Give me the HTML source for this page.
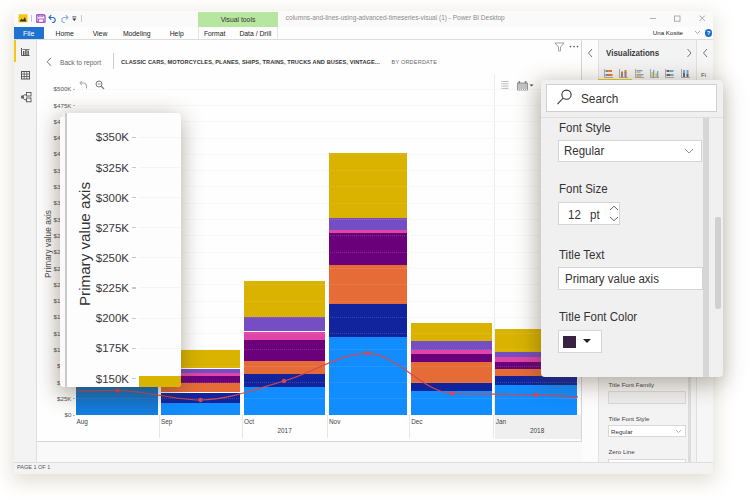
<!DOCTYPE html><html><head><meta charset="utf-8"><style>
*{margin:0;padding:0;box-sizing:border-box}
html,body{width:750px;height:500px;overflow:hidden;background:#fff;font-family:"Liberation Sans", sans-serif}
.a{position:absolute}
.t{position:absolute;white-space:nowrap;line-height:1}
</style></head><body>

<div class="a" style="left:14px;top:11px;width:699px;height:463px;background:#fafafa;box-shadow:0 6px 18px 2px rgba(140,120,85,0.24)"></div>
<div class="a" style="left:14px;top:11px;width:699px;height:16px;background:#fafafa"></div>
<div class="a" style="left:14px;top:27px;width:699px;height:12.5px;background:#fdfdfd;border-bottom:1px solid #dcdcdc"></div>
<div class="a" style="left:14px;top:27px;width:30px;height:12px;background:#1f72cf"></div>
<div class="t" style="left:23px;top:30.3px;font-size:7px;color:#fff">File</div>
<div class="t" style="left:24.700000000000003px;width:80px;text-align:center;top:30.6px;font-size:6.8px;color:#222">Home</div>
<div class="t" style="left:60px;width:80px;text-align:center;top:30.6px;font-size:6.8px;color:#222">View</div>
<div class="t" style="left:96.69999999999999px;width:80px;text-align:center;top:30.6px;font-size:6.8px;color:#222">Modeling</div>
<div class="t" style="left:136.7px;width:80px;text-align:center;top:30.6px;font-size:6.8px;color:#222">Help</div>
<div class="t" style="left:174.7px;width:80px;text-align:center;top:30.6px;font-size:6.8px;color:#222">Format</div>
<div class="t" style="left:215.3px;width:80px;text-align:center;top:30.6px;font-size:6.8px;color:#222">Data / Drill</div>
<div class="a" style="left:198px;top:12px;width:80px;height:14.6px;background:#b6e6a0"></div>
<div class="a" style="left:198px;top:26.6px;width:80px;height:12px;border-left:1px solid #e4e4e4;border-right:1px solid #e4e4e4"></div>
<div class="t" style="left:198px;width:80px;text-align:center;top:17.2px;font-size:6.8px;color:#333">Visual tools</div>
<div class="t" style="left:285.8px;top:15.2px;font-size:6.5px;color:#8a8a8a">columns-and-lines-using-advanced-timeseries-visual (1) - Power BI Desktop</div>
<svg class="a" style="left:17.5px;top:14px" width="10" height="9"><rect x="0.5" y="0.3" width="9" height="8" fill="#f2c811"/><path d="M2 7 L3.5 4.5 L5 6 L7 3 L8 7 Z" fill="#3a2e28"/><rect x="1.8" y="6.6" width="6.5" height="0.9" fill="#3a2e28"/></svg>
<div class="a" style="left:30.5px;top:14.5px;width:1px;height:7px;background:#c8c8c8"></div>
<svg class="a" style="left:36px;top:14px" width="10" height="9"><path d="M0.8 0.8 H8 L9 1.8 V8.2 H0.8 Z" fill="none" stroke="#9a3fbf" stroke-width="1.2"/><rect x="2.5" y="0.8" width="4.5" height="2" fill="none" stroke="#9a3fbf" stroke-width="0.6"/><rect x="2.3" y="5" width="5" height="3.2" fill="#fff" stroke="#9a3fbf" stroke-width="0.8"/></svg>
<svg class="a" style="left:48px;top:13.5px" width="9" height="9"><path d="M3.2 1.2 L1 3.5 L3.2 5.7" fill="none" stroke="#2e6fc0" stroke-width="1.2"/><path d="M1.2 3.5 H5.2 A2.6 2.6 0 0 1 5.2 8.6 H4" fill="none" stroke="#2e6fc0" stroke-width="1.2"/></svg>
<svg class="a" style="left:60px;top:13.5px" width="9" height="9"><path d="M5.8 1.2 L8 3.5 L5.8 5.7" fill="none" stroke="#8fb4e0" stroke-width="1.2"/><path d="M7.8 3.5 H3.8 A2.6 2.6 0 0 0 3.8 8.6 H5" fill="none" stroke="#8fb4e0" stroke-width="1.2"/></svg>
<svg class="a" style="left:72px;top:16px" width="5" height="6"><rect x="0.3" y="0.5" width="4" height="0.8" fill="#333"/><path d="M0.3 2.5 H4.3 L2.3 5 Z" fill="#333"/></svg>
<div class="a" style="left:80.5px;top:14.5px;width:1px;height:7px;background:#c8c8c8"></div>
<svg class="a" style="left:648px;top:13px" width="60" height="10"><line x1="2" y1="5.5" x2="8" y2="5.5" stroke="#999" stroke-width="0.8"/><rect x="26.5" y="3" width="5.5" height="5.2" fill="none" stroke="#999" stroke-width="0.8"/><path d="M51.5 2.5 L57 8 M57 2.5 L51.5 8" stroke="#999" stroke-width="0.8"/></svg>
<div class="t" style="left:652.8px;top:30px;font-size:6.2px;color:#222">Una Kosite</div>
<svg class="a" style="left:694px;top:30px" width="7" height="5"><path d="M1 1 L3.5 3.5 L6 1" fill="none" stroke="#999" stroke-width="0.8"/></svg>
<div class="a" style="left:704.5px;top:29.3px;width:7.5px;height:7.5px;border-radius:50%;background:#1a6fd0"></div>
<div class="t" style="left:706.8px;top:30.2px;font-size:6px;font-weight:bold;color:#fff">?</div>
<div class="a" style="left:14px;top:39.5px;width:22.5px;height:422.5px;background:#f3f3f3;border-right:1px solid #dedede"></div>
<div class="a" style="left:14px;top:40px;width:2px;height:22px;background:#f2c811"></div>
<svg class="a" style="left:21px;top:48px" width="9" height="8"><path d="M0.5 0 V7.5 H8.5" fill="none" stroke="#555" stroke-width="1"/><rect x="2" y="3" width="1.4" height="4" fill="#555"/><rect x="4.2" y="1.5" width="1.4" height="5.5" fill="#555"/><rect x="6.4" y="2.5" width="1.4" height="4.5" fill="#555"/><rect x="1.5" y="1" width="7" height="1" fill="#777"/></svg>
<svg class="a" style="left:21px;top:70.5px" width="9" height="9"><rect x="0.5" y="0.5" width="8" height="7.5" fill="none" stroke="#555" stroke-width="1"/><path d="M0.5 3 H8.5 M0.5 5.5 H8.5 M3.2 0.5 V8 M5.8 0.5 V8" stroke="#555" stroke-width="0.8"/></svg>
<svg class="a" style="left:20.5px;top:92px" width="11" height="11"><rect x="5.5" y="0.5" width="4.5" height="3.5" fill="none" stroke="#555" stroke-width="0.9"/><rect x="5.5" y="6" width="4.5" height="3.8" fill="none" stroke="#555" stroke-width="0.9"/><path d="M0.8 5 L4 2.5 L5.5 3.5 M0.8 5 L4 8 L5.5 7.5" fill="none" stroke="#555" stroke-width="0.9"/><rect x="0.5" y="4" width="2" height="2" fill="none" stroke="#555" stroke-width="0.8"/></svg>
<div class="a" style="left:37px;top:40px;width:545px;height:422px;background:#f9f9f9"></div>
<div class="a" style="left:37px;top:40px;width:544.5px;height:402px;background:#fefefe;border-right:1px solid #d6d6d6;border-bottom:1px solid #d6d6d6"></div>
<svg class="a" style="left:46px;top:57px" width="8" height="10"><path d="M5 0.8 L1.2 4.8 L5 8.8" fill="none" stroke="#666" stroke-width="0.9"/></svg>
<div class="t" style="left:60px;top:59.5px;font-size:6.6px;color:#666">Back to report</div>
<div class="a" style="left:112.5px;top:53px;width:1px;height:16px;background:#ccc"></div>
<div class="t" style="left:121px;top:60px;font-size:5.6px;font-weight:bold;color:#333;letter-spacing:0.1px">CLASSIC CARS, MOTORCYCLES, PLANES, SHIPS, TRAINS, TRUCKS AND BUSES, VINTAGE...</div>
<div class="t" style="left:391.5px;top:59.6px;font-size:5.5px;color:#666;letter-spacing:0.22px">BY ORDERDATE</div>
<svg class="a" style="left:554px;top:42px" width="11" height="10"><path d="M1 1 L10 1 L6.5 5 L6.5 9 L4.5 9 L4.5 5 Z" fill="none" stroke="#999" stroke-width="0.9"/></svg>
<svg class="a" style="left:568px;top:44px" width="12" height="5"><circle cx="2.5" cy="2.6" r="0.8" fill="#555"/><circle cx="6" cy="2.6" r="0.8" fill="#555"/><circle cx="9.5" cy="2.6" r="0.8" fill="#555"/></svg>
<svg class="a" style="left:590px;top:73px" width="8" height="7"><path d="M6.5 0.8 L1 3.5 L6.5 6.2" fill="none" stroke="#999" stroke-width="0.8"/></svg>
<svg class="a" style="left:78.5px;top:80px" width="9" height="9"><path d="M3 0.8 L0.8 3 L3 5.2" fill="none" stroke="#999" stroke-width="0.9"/><path d="M1 3 H4.5 Q7.5 3 7.5 6 V8.5" fill="none" stroke="#999" stroke-width="0.9"/></svg>
<svg class="a" style="left:95px;top:80px" width="10" height="10"><circle cx="4" cy="4" r="3" fill="none" stroke="#777" stroke-width="1"/><line x1="6.2" y1="6.2" x2="9" y2="9" stroke="#777" stroke-width="1.2"/><line x1="2.5" y1="4" x2="5.5" y2="4" stroke="#777" stroke-width="0.8"/></svg>
<svg class="a" style="left:500.5px;top:80px" width="8" height="10"><g fill="#999"><rect x="0.5" y="1" width="1" height="1"/><rect x="0.5" y="3.3" width="1" height="1"/><rect x="0.5" y="5.6" width="1" height="1"/><rect x="0.5" y="7.9" width="1" height="1"/></g><g stroke="#aaa" stroke-width="0.8"><line x1="2" y1="1.5" x2="7.5" y2="1.5"/><line x1="2" y1="3.8" x2="7.5" y2="3.8"/><line x1="2" y1="6.1" x2="7.5" y2="6.1"/><line x1="2" y1="8.4" x2="7.5" y2="8.4"/></g></svg>
<svg class="a" style="left:516.5px;top:80.5px" width="18" height="10"><rect x="0.5" y="2" width="10" height="7" fill="#c4c4c4" stroke="#888" stroke-width="0.8"/><rect x="1.5" y="0" width="1.6" height="2.5" fill="#888"/><rect x="7.8" y="0" width="1.6" height="2.5" fill="#888"/><path d="M12.5 3.5 L16.5 3.5 L14.5 5.5 Z" fill="#444"/></svg>
<div class="t" style="left:30px;width:41.5px;text-align:right;top:412.2px;font-size:6.2px;color:#555">$0</div>
<div class="a" style="left:72.5px;top:414.6px;width:2px;height:0.8px;background:#bbb"></div>
<div class="t" style="left:30px;width:41.5px;text-align:right;top:395.9px;font-size:6.2px;color:#555">$25K</div>
<div class="a" style="left:72.5px;top:398.3px;width:2px;height:0.8px;background:#bbb"></div>
<div class="a" style="left:76px;top:398.3px;width:505px;height:0;border-top:1px dotted #f0f0f0"></div>
<div class="t" style="left:30px;width:41.5px;text-align:right;top:379.6px;font-size:6.2px;color:#555">$50K</div>
<div class="a" style="left:72.5px;top:382.0px;width:2px;height:0.8px;background:#bbb"></div>
<div class="a" style="left:76px;top:382.0px;width:505px;height:0;border-top:1px dotted #f0f0f0"></div>
<div class="t" style="left:30px;width:41.5px;text-align:right;top:363.3px;font-size:6.2px;color:#555">$75K</div>
<div class="a" style="left:72.5px;top:365.7px;width:2px;height:0.8px;background:#bbb"></div>
<div class="a" style="left:76px;top:365.7px;width:505px;height:0;border-top:1px dotted #f0f0f0"></div>
<div class="t" style="left:30px;width:41.5px;text-align:right;top:347.0px;font-size:6.2px;color:#555">$100K</div>
<div class="a" style="left:72.5px;top:349.4px;width:2px;height:0.8px;background:#bbb"></div>
<div class="a" style="left:76px;top:349.4px;width:505px;height:0;border-top:1px dotted #f0f0f0"></div>
<div class="t" style="left:30px;width:41.5px;text-align:right;top:330.7px;font-size:6.2px;color:#555">$125K</div>
<div class="a" style="left:72.5px;top:333.1px;width:2px;height:0.8px;background:#bbb"></div>
<div class="a" style="left:76px;top:333.1px;width:505px;height:0;border-top:1px dotted #f0f0f0"></div>
<div class="t" style="left:30px;width:41.5px;text-align:right;top:314.4px;font-size:6.2px;color:#555">$150K</div>
<div class="a" style="left:72.5px;top:316.8px;width:2px;height:0.8px;background:#bbb"></div>
<div class="a" style="left:76px;top:316.8px;width:505px;height:0;border-top:1px dotted #f0f0f0"></div>
<div class="t" style="left:30px;width:41.5px;text-align:right;top:298.1px;font-size:6.2px;color:#555">$175K</div>
<div class="a" style="left:72.5px;top:300.5px;width:2px;height:0.8px;background:#bbb"></div>
<div class="a" style="left:76px;top:300.5px;width:505px;height:0;border-top:1px dotted #f0f0f0"></div>
<div class="t" style="left:30px;width:41.5px;text-align:right;top:281.8px;font-size:6.2px;color:#555">$200K</div>
<div class="a" style="left:72.5px;top:284.2px;width:2px;height:0.8px;background:#bbb"></div>
<div class="a" style="left:76px;top:284.2px;width:505px;height:0;border-top:1px dotted #f0f0f0"></div>
<div class="t" style="left:30px;width:41.5px;text-align:right;top:265.5px;font-size:6.2px;color:#555">$225K</div>
<div class="a" style="left:72.5px;top:267.9px;width:2px;height:0.8px;background:#bbb"></div>
<div class="a" style="left:76px;top:267.9px;width:505px;height:0;border-top:1px dotted #f0f0f0"></div>
<div class="t" style="left:30px;width:41.5px;text-align:right;top:249.2px;font-size:6.2px;color:#555">$250K</div>
<div class="a" style="left:72.5px;top:251.6px;width:2px;height:0.8px;background:#bbb"></div>
<div class="a" style="left:76px;top:251.6px;width:505px;height:0;border-top:1px dotted #f0f0f0"></div>
<div class="t" style="left:30px;width:41.5px;text-align:right;top:232.9px;font-size:6.2px;color:#555">$275K</div>
<div class="a" style="left:72.5px;top:235.3px;width:2px;height:0.8px;background:#bbb"></div>
<div class="a" style="left:76px;top:235.3px;width:505px;height:0;border-top:1px dotted #f0f0f0"></div>
<div class="t" style="left:30px;width:41.5px;text-align:right;top:216.6px;font-size:6.2px;color:#555">$300K</div>
<div class="a" style="left:72.5px;top:219.0px;width:2px;height:0.8px;background:#bbb"></div>
<div class="a" style="left:76px;top:219.0px;width:505px;height:0;border-top:1px dotted #f0f0f0"></div>
<div class="t" style="left:30px;width:41.5px;text-align:right;top:200.3px;font-size:6.2px;color:#555">$325K</div>
<div class="a" style="left:72.5px;top:202.7px;width:2px;height:0.8px;background:#bbb"></div>
<div class="a" style="left:76px;top:202.7px;width:505px;height:0;border-top:1px dotted #f0f0f0"></div>
<div class="t" style="left:30px;width:41.5px;text-align:right;top:184.0px;font-size:6.2px;color:#555">$350K</div>
<div class="a" style="left:72.5px;top:186.4px;width:2px;height:0.8px;background:#bbb"></div>
<div class="a" style="left:76px;top:186.4px;width:505px;height:0;border-top:1px dotted #f0f0f0"></div>
<div class="t" style="left:30px;width:41.5px;text-align:right;top:167.7px;font-size:6.2px;color:#555">$375K</div>
<div class="a" style="left:72.5px;top:170.1px;width:2px;height:0.8px;background:#bbb"></div>
<div class="a" style="left:76px;top:170.1px;width:505px;height:0;border-top:1px dotted #f0f0f0"></div>
<div class="t" style="left:30px;width:41.5px;text-align:right;top:151.4px;font-size:6.2px;color:#555">$400K</div>
<div class="a" style="left:72.5px;top:153.8px;width:2px;height:0.8px;background:#bbb"></div>
<div class="a" style="left:76px;top:153.8px;width:505px;height:0;border-top:1px dotted #f0f0f0"></div>
<div class="t" style="left:30px;width:41.5px;text-align:right;top:135.1px;font-size:6.2px;color:#555">$425K</div>
<div class="a" style="left:72.5px;top:137.5px;width:2px;height:0.8px;background:#bbb"></div>
<div class="a" style="left:76px;top:137.5px;width:505px;height:0;border-top:1px dotted #f0f0f0"></div>
<div class="t" style="left:30px;width:41.5px;text-align:right;top:118.8px;font-size:6.2px;color:#555">$450K</div>
<div class="a" style="left:72.5px;top:121.2px;width:2px;height:0.8px;background:#bbb"></div>
<div class="a" style="left:76px;top:121.2px;width:505px;height:0;border-top:1px dotted #f0f0f0"></div>
<div class="t" style="left:30px;width:41.5px;text-align:right;top:102.5px;font-size:6.2px;color:#555">$475K</div>
<div class="a" style="left:72.5px;top:104.9px;width:2px;height:0.8px;background:#bbb"></div>
<div class="a" style="left:76px;top:104.9px;width:505px;height:0;border-top:1px dotted #f0f0f0"></div>
<div class="t" style="left:30px;width:41.5px;text-align:right;top:86.2px;font-size:6.2px;color:#555">$500K</div>
<div class="a" style="left:72.5px;top:88.6px;width:2px;height:0.8px;background:#bbb"></div>
<div class="a" style="left:76px;top:88.6px;width:505px;height:0;border-top:1px dotted #f0f0f0"></div>
<div class="t" style="left:47.5px;top:244px;font-size:8.3px;color:#444;transform:translate(-50%,-50%) rotate(-90deg)">Primary value axis</div>
<div class="a" style="left:495px;top:415px;width:86px;height:23.5px;background:#efefef"></div>
<div class="a" style="left:493.5px;top:75px;width:1px;height:340px;background:#ececec"></div>
<div class="a" style="left:76px;top:316.9px;width:82px;height:13.1px;background:#d9b300"></div>
<div class="a" style="left:76px;top:330px;width:82px;height:6px;background:#744ec2"></div>
<div class="a" style="left:76px;top:336px;width:82px;height:4px;background:#e044a7"></div>
<div class="a" style="left:76px;top:340px;width:82px;height:12px;background:#6b007b"></div>
<div class="a" style="left:76px;top:352px;width:82px;height:16px;background:#e66c37"></div>
<div class="a" style="left:76px;top:368px;width:82px;height:14px;background:#12239e"></div>
<div class="a" style="left:76px;top:382px;width:82px;height:32.6px;background:#118dff"></div>
<div class="a" style="left:160.5px;top:349.6px;width:79.5px;height:18.9px;background:#d9b300"></div>
<div class="a" style="left:160.5px;top:368.5px;width:79.5px;height:4.8px;background:#744ec2"></div>
<div class="a" style="left:160.5px;top:373.3px;width:79.5px;height:2.7px;background:#e044a7"></div>
<div class="a" style="left:160.5px;top:376px;width:79.5px;height:6.9px;background:#6b007b"></div>
<div class="a" style="left:160.5px;top:382.9px;width:79.5px;height:9.6px;background:#e66c37"></div>
<div class="a" style="left:160.5px;top:392.5px;width:79.5px;height:10.2px;background:#12239e"></div>
<div class="a" style="left:160.5px;top:402.7px;width:79.5px;height:11.9px;background:#118dff"></div>
<div class="a" style="left:243.5px;top:281.4px;width:81.5px;height:36.0px;background:#d9b300"></div>
<div class="a" style="left:243.5px;top:317.4px;width:81.5px;height:14.1px;background:#744ec2"></div>
<div class="a" style="left:243.5px;top:331.5px;width:81.5px;height:8.5px;background:#e044a7"></div>
<div class="a" style="left:243.5px;top:340px;width:81.5px;height:20.6px;background:#6b007b"></div>
<div class="a" style="left:243.5px;top:360.6px;width:81.5px;height:13.8px;background:#e66c37"></div>
<div class="a" style="left:243.5px;top:374.4px;width:81.5px;height:12.6px;background:#12239e"></div>
<div class="a" style="left:243.5px;top:387px;width:81.5px;height:27.6px;background:#118dff"></div>
<div class="a" style="left:328.5px;top:153.4px;width:78.5px;height:64.2px;background:#d9b300"></div>
<div class="a" style="left:328.5px;top:217.6px;width:78.5px;height:12.4px;background:#744ec2"></div>
<div class="a" style="left:328.5px;top:230px;width:78.5px;height:3px;background:#e044a7"></div>
<div class="a" style="left:328.5px;top:233px;width:78.5px;height:31.7px;background:#6b007b"></div>
<div class="a" style="left:328.5px;top:264.7px;width:78.5px;height:39.0px;background:#e66c37"></div>
<div class="a" style="left:328.5px;top:303.7px;width:78.5px;height:33.3px;background:#12239e"></div>
<div class="a" style="left:328.5px;top:337px;width:78.5px;height:77.6px;background:#118dff"></div>
<div class="a" style="left:410.7px;top:323.2px;width:81.3px;height:18.1px;background:#d9b300"></div>
<div class="a" style="left:410.7px;top:341.3px;width:81.3px;height:8.4px;background:#744ec2"></div>
<div class="a" style="left:410.7px;top:349.7px;width:81.3px;height:4.2px;background:#e044a7"></div>
<div class="a" style="left:410.7px;top:353.9px;width:81.3px;height:8.4px;background:#6b007b"></div>
<div class="a" style="left:410.7px;top:362.3px;width:81.3px;height:21.0px;background:#e66c37"></div>
<div class="a" style="left:410.7px;top:383.3px;width:81.3px;height:7.3px;background:#12239e"></div>
<div class="a" style="left:410.7px;top:390.6px;width:81.3px;height:24.0px;background:#118dff"></div>
<div class="a" style="left:495.3px;top:329.3px;width:81.7px;height:22.5px;background:#d9b300"></div>
<div class="a" style="left:495.3px;top:351.8px;width:81.7px;height:5.2px;background:#744ec2"></div>
<div class="a" style="left:495.3px;top:357px;width:81.7px;height:5.3px;background:#e044a7"></div>
<div class="a" style="left:495.3px;top:362.3px;width:81.7px;height:6.3px;background:#6b007b"></div>
<div class="a" style="left:495.3px;top:368.6px;width:81.7px;height:7.4px;background:#e66c37"></div>
<div class="a" style="left:495.3px;top:376px;width:81.7px;height:9px;background:#12239e"></div>
<div class="a" style="left:495.3px;top:385px;width:81.7px;height:29.6px;background:#118dff"></div>
<div class="a" style="left:76px;top:398.3px;width:501px;height:0;border-top:1px dotted rgba(255,255,255,0.16)"></div>
<div class="a" style="left:76px;top:382.0px;width:501px;height:0;border-top:1px dotted rgba(255,255,255,0.16)"></div>
<div class="a" style="left:76px;top:365.7px;width:501px;height:0;border-top:1px dotted rgba(255,255,255,0.16)"></div>
<div class="a" style="left:76px;top:349.4px;width:501px;height:0;border-top:1px dotted rgba(255,255,255,0.16)"></div>
<div class="a" style="left:76px;top:333.1px;width:501px;height:0;border-top:1px dotted rgba(255,255,255,0.16)"></div>
<div class="a" style="left:76px;top:316.8px;width:501px;height:0;border-top:1px dotted rgba(255,255,255,0.16)"></div>
<div class="a" style="left:76px;top:300.5px;width:501px;height:0;border-top:1px dotted rgba(255,255,255,0.16)"></div>
<div class="a" style="left:76px;top:284.2px;width:501px;height:0;border-top:1px dotted rgba(255,255,255,0.16)"></div>
<div class="a" style="left:76px;top:267.9px;width:501px;height:0;border-top:1px dotted rgba(255,255,255,0.16)"></div>
<div class="a" style="left:76px;top:251.6px;width:501px;height:0;border-top:1px dotted rgba(255,255,255,0.16)"></div>
<div class="a" style="left:76px;top:235.3px;width:501px;height:0;border-top:1px dotted rgba(255,255,255,0.16)"></div>
<div class="a" style="left:76px;top:219.0px;width:501px;height:0;border-top:1px dotted rgba(255,255,255,0.16)"></div>
<div class="a" style="left:76px;top:202.7px;width:501px;height:0;border-top:1px dotted rgba(255,255,255,0.16)"></div>
<div class="a" style="left:76px;top:186.4px;width:501px;height:0;border-top:1px dotted rgba(255,255,255,0.16)"></div>
<div class="a" style="left:76px;top:170.1px;width:501px;height:0;border-top:1px dotted rgba(255,255,255,0.16)"></div>
<div class="a" style="left:76px;top:153.8px;width:501px;height:0;border-top:1px dotted rgba(255,255,255,0.16)"></div>
<div class="a" style="left:76px;top:137.5px;width:501px;height:0;border-top:1px dotted rgba(255,255,255,0.16)"></div>
<div class="a" style="left:76px;top:121.2px;width:501px;height:0;border-top:1px dotted rgba(255,255,255,0.16)"></div>
<div class="a" style="left:76px;top:104.9px;width:501px;height:0;border-top:1px dotted rgba(255,255,255,0.16)"></div>
<div class="a" style="left:76px;top:88.6px;width:501px;height:0;border-top:1px dotted rgba(255,255,255,0.16)"></div>
<div class="a" style="left:76px;top:386px;width:82px;height:28.6px;background:linear-gradient(rgba(20,10,0,0.22),rgba(20,10,0,0.1))"></div>
<div class="t" style="left:76.5px;top:419.3px;font-size:6.4px;color:#444">Aug</div>
<div class="t" style="left:161.0px;top:419.3px;font-size:6.4px;color:#444">Sep</div>
<div class="a" style="left:158.5px;top:414.6px;width:1px;height:23px;background:#e6e6e6"></div>
<div class="t" style="left:244.0px;top:419.3px;font-size:6.4px;color:#444">Oct</div>
<div class="a" style="left:241.5px;top:414.6px;width:1px;height:23px;background:#e6e6e6"></div>
<div class="t" style="left:329.0px;top:419.3px;font-size:6.4px;color:#444">Nov</div>
<div class="a" style="left:326.5px;top:414.6px;width:1px;height:23px;background:#e6e6e6"></div>
<div class="t" style="left:411.2px;top:419.3px;font-size:6.4px;color:#444">Dec</div>
<div class="a" style="left:408.7px;top:414.6px;width:1px;height:23px;background:#e6e6e6"></div>
<div class="t" style="left:495.8px;top:419.3px;font-size:6.4px;color:#444">Jan</div>
<div class="a" style="left:493.3px;top:414.6px;width:1px;height:23px;background:#e6e6e6"></div>
<div class="t" style="left:277.5px;top:427.5px;font-size:6.4px;color:#444">2017</div>
<div class="t" style="left:530px;top:427.5px;font-size:6.4px;color:#444">2018</div>
<svg class="a" style="left:0;top:0" width="750" height="500"><path d="M76 391 C89.83 390.83 103.67 390.5 117.5 390.5 C145.17 390.5 172.83 400.0 200.5 400 C228.33 400.0 256.17 388.77 284 381 C311.9 373.21 339.8 353.3 367.7 353.3 C395.8 353.3 423.9 392.63 452 393.5 C479.9 394.37 507.8 393.93 535.7 394.8 C549.8 395.24 563.9 396.13 578 396.8" fill="none" stroke="#d9464e" stroke-width="1.2"/><circle cx="117.5" cy="390.5" r="2.2" fill="#d9464e"/><circle cx="200.5" cy="400" r="2.2" fill="#d9464e"/><circle cx="284" cy="381" r="2.2" fill="#d9464e"/><circle cx="367.7" cy="353.3" r="2.2" fill="#d9464e"/><circle cx="452" cy="393.5" r="2.2" fill="#d9464e"/><circle cx="535.7" cy="394.8" r="2.2" fill="#d9464e"/></svg>
<div class="a" style="left:582px;top:40px;width:17px;height:422px;background:#fcfcfc;border-right:1px solid #e2e2e2"></div>
<svg class="a" style="left:587px;top:48px" width="7" height="10"><path d="M5 1 L1.5 5 L5 9" fill="none" stroke="#666" stroke-width="0.9"/></svg>
<div class="a" style="left:599px;top:40px;width:98px;height:422px;background:#f3f3f3;border-right:1px solid #e0e0e0"></div>
<div class="t" style="left:606px;top:48.8px;font-size:9.2px;font-weight:bold;color:#3a3a3a;transform:scaleX(0.87);transform-origin:0 0">Visualizations</div>
<svg class="a" style="left:685.5px;top:48px" width="7" height="10"><path d="M1.5 1 L5 5 L1.5 9" fill="none" stroke="#666" stroke-width="0.9"/></svg>
<div class="a" style="left:697px;top:40px;width:16px;height:422px;background:#f6f6f6"></div>
<svg class="a" style="left:702px;top:48px" width="7" height="10"><path d="M5 1 L1.5 5 L5 9" fill="none" stroke="#666" stroke-width="0.9"/></svg>
<div class="t" style="left:701px;top:72px;font-size:6px;color:#444">Fi</div>
<svg class="a" style="left:604px;top:69px" width="9.5" height="9"><path d="M0.5 0 V8.5 H9" stroke="#999" stroke-width="0.8" fill="none"/><rect x="1.5" y="1" width="3" height="2" fill="#888"/><rect x="4.5" y="1" width="3.5" height="2" fill="#e8742f"/><rect x="1.5" y="5" width="2.5" height="2" fill="#888"/><rect x="4" y="5" width="4.5" height="2" fill="#e8742f"/></svg>
<svg class="a" style="left:619px;top:69px" width="9.5" height="9"><path d="M0.5 0 V8.5 H9" stroke="#999" stroke-width="0.8" fill="none"/><rect x="2" y="4" width="2" height="4" fill="#888"/><rect x="2" y="2.5" width="2" height="2" fill="#e8742f"/><rect x="5.5" y="3" width="2" height="5" fill="#888"/><rect x="5.5" y="1" width="2" height="3" fill="#e8742f"/></svg>
<svg class="a" style="left:634.5px;top:69px" width="9.5" height="9"><path d="M0.5 0 V8.5 H9" stroke="#999" stroke-width="0.8" fill="none"/><rect x="1.5" y="1" width="6" height="1.3" fill="#6fa8dc"/><rect x="1.5" y="2.5" width="4" height="1.3" fill="#e8a53a"/><rect x="1.5" y="5" width="7" height="1.3" fill="#6fa8dc"/><rect x="1.5" y="6.5" width="5" height="1.3" fill="#e8a53a"/></svg>
<svg class="a" style="left:650px;top:69px" width="9.5" height="9"><path d="M0.5 0 V8.5 H9" stroke="#999" stroke-width="0.8" fill="none"/><rect x="1.5" y="3" width="1.3" height="5" fill="#e8c43a"/><rect x="3" y="1" width="1.3" height="7" fill="#6fa8dc"/><rect x="5.5" y="4" width="1.3" height="4" fill="#e8c43a"/><rect x="7" y="2" width="1.3" height="6" fill="#6fa8dc"/></svg>
<svg class="a" style="left:665px;top:69px" width="9.5" height="9"><path d="M0.5 0 V8.5 H9" stroke="#999" stroke-width="0.8" fill="none"/><rect x="1.5" y="1" width="3" height="2" fill="#666"/><rect x="4.5" y="1" width="4" height="2" fill="#6fa8dc"/><rect x="1.5" y="5" width="4" height="2" fill="#666"/><rect x="5.5" y="5" width="3" height="2" fill="#6fa8dc"/></svg>
<svg class="a" style="left:680.5px;top:69px" width="9.5" height="9"><path d="M0.5 0 V8.5 H9" stroke="#999" stroke-width="0.8" fill="none"/><rect x="2" y="1" width="2" height="3" fill="#6fa8dc"/><rect x="2" y="4" width="2" height="4" fill="#666"/><rect x="5.5" y="1" width="2" height="4" fill="#6fa8dc"/><rect x="5.5" y="5" width="2" height="3" fill="#666"/></svg>
<div class="a" style="left:598px;top:78.5px;width:34px;height:1.2px;background:#f2c811"></div>
<div class="t" style="left:608.5px;top:382px;font-size:6.2px;color:#444">Title Font Family</div>
<div class="a" style="left:608px;top:391.4px;width:78px;height:12.6px;background:#ececec;border:1px solid #d8d8d8"></div>
<div class="t" style="left:608.5px;top:415.5px;font-size:6.2px;color:#444">Title Font Style</div>
<div class="a" style="left:608px;top:425px;width:78px;height:12px;background:#fff;border:1px solid #d8d8d8"></div>
<div class="t" style="left:611px;top:428.5px;font-size:6.2px;color:#333">Regular</div>
<svg class="a" style="left:675px;top:429px" width="7" height="5"><path d="M1 1 L3.5 3.5 L6 1" fill="none" stroke="#999" stroke-width="0.7"/></svg>
<div class="t" style="left:608.5px;top:449px;font-size:6.2px;color:#444">Zero Line</div>
<div class="a" style="left:608px;top:458.6px;width:78px;height:4px;background:#fff;border:1px solid #d8d8d8;border-bottom:none"></div>
<div class="a" style="left:687.5px;top:90px;width:3px;height:372px;background:#dcdcdc"></div>
<div class="a" style="left:14px;top:462px;width:699px;height:12px;background:#f3f3f3;border-top:1px solid #dedede"></div>
<div class="t" style="left:17px;top:465.3px;font-size:5.5px;color:#555">PAGE 1 OF 1</div>
<div class="a" style="left:62px;top:113px;width:119px;height:273.5px;background:#fdfdfd;border-radius:0 4px 4px 4px;box-shadow:-2px 6px 22px 2px rgba(70,55,30,0.42)"></div>
<div class="a" style="left:60px;top:117px;width:5px;height:269.5px;background:#fbf9f9;border-bottom-left-radius:4px"></div>
<div class="a" style="left:62px;top:113px;width:3px;height:4px;background:rgba(240,236,230,0.9)"></div>
<div class="a" style="left:65px;top:113px;width:2px;height:273.5px;background:#cacaca"></div>
<div class="t" style="left:70px;width:59px;text-align:right;top:132.4px;font-size:11.5px;color:#3a3640">$350K</div>
<div class="a" style="left:132px;top:136.6px;width:4px;height:1.2px;background:#c8c8c8"></div>
<div class="a" style="left:139px;top:136.6px;width:41px;height:0;border-top:1px dotted #ececec"></div>
<div class="t" style="left:70px;width:59px;text-align:right;top:162.55px;font-size:11.5px;color:#3a3640">$325K</div>
<div class="a" style="left:132px;top:166.75px;width:4px;height:1.2px;background:#c8c8c8"></div>
<div class="a" style="left:139px;top:166.75px;width:41px;height:0;border-top:1px dotted #ececec"></div>
<div class="t" style="left:70px;width:59px;text-align:right;top:192.7px;font-size:11.5px;color:#3a3640">$300K</div>
<div class="a" style="left:132px;top:196.9px;width:4px;height:1.2px;background:#c8c8c8"></div>
<div class="a" style="left:139px;top:196.9px;width:41px;height:0;border-top:1px dotted #ececec"></div>
<div class="t" style="left:70px;width:59px;text-align:right;top:222.85px;font-size:11.5px;color:#3a3640">$275K</div>
<div class="a" style="left:132px;top:227.05px;width:4px;height:1.2px;background:#c8c8c8"></div>
<div class="a" style="left:139px;top:227.05px;width:41px;height:0;border-top:1px dotted #ececec"></div>
<div class="t" style="left:70px;width:59px;text-align:right;top:253.0px;font-size:11.5px;color:#3a3640">$250K</div>
<div class="a" style="left:132px;top:257.2px;width:4px;height:1.2px;background:#c8c8c8"></div>
<div class="a" style="left:139px;top:257.2px;width:41px;height:0;border-top:1px dotted #ececec"></div>
<div class="t" style="left:70px;width:59px;text-align:right;top:283.15px;font-size:11.5px;color:#3a3640">$225K</div>
<div class="a" style="left:132px;top:287.35px;width:4px;height:1.2px;background:#c8c8c8"></div>
<div class="a" style="left:139px;top:287.35px;width:41px;height:0;border-top:1px dotted #ececec"></div>
<div class="t" style="left:70px;width:59px;text-align:right;top:313.3px;font-size:11.5px;color:#3a3640">$200K</div>
<div class="a" style="left:132px;top:317.5px;width:4px;height:1.2px;background:#c8c8c8"></div>
<div class="a" style="left:139px;top:317.5px;width:41px;height:0;border-top:1px dotted #ececec"></div>
<div class="t" style="left:70px;width:59px;text-align:right;top:343.45px;font-size:11.5px;color:#3a3640">$175K</div>
<div class="a" style="left:132px;top:347.65px;width:4px;height:1.2px;background:#c8c8c8"></div>
<div class="a" style="left:139px;top:347.65px;width:41px;height:0;border-top:1px dotted #ececec"></div>
<div class="t" style="left:70px;width:59px;text-align:right;top:373.6px;font-size:11.5px;color:#3a3640">$150K</div>
<div class="a" style="left:132px;top:377.8px;width:4px;height:1.2px;background:#c8c8c8"></div>
<div class="a" style="left:139px;top:377.8px;width:41px;height:0;border-top:1px dotted #ececec"></div>
<div class="t" style="left:85px;top:244px;font-size:15.2px;color:#333;transform:translate(-50%,-50%) rotate(-90deg)">Primary value axis</div>
<div class="a" style="left:139px;top:375.5px;width:42px;height:11px;background:#d9b300;border-bottom-right-radius:4px"></div>
<div class="a" style="left:541px;top:79.6px;width:182px;height:297.2px;background:#f1f0f0;border-radius:4px;box-shadow:-2px 5px 22px 2px rgba(70,55,30,0.38)"></div>
<div class="a" style="left:545.6px;top:83.6px;width:171px;height:28.4px;background:#fff;border:1px solid #d0d0d0"></div>
<svg class="a" style="left:555px;top:88px" width="18" height="18"><circle cx="11.5" cy="6.7" r="4.6" fill="none" stroke="#333" stroke-width="1.1"/><line x1="8.2" y1="10" x2="2.5" y2="16.2" stroke="#333" stroke-width="1.1"/></svg>
<div class="t" style="left:581.3px;top:92.8px;font-size:12.3px;color:#333;transform:scaleX(0.958);transform-origin:0 0">Search</div>
<div class="a" style="left:541px;top:117px;width:182px;height:1px;background:#dedede"></div>
<div class="t" style="left:558.5px;top:122px;font-size:12px;color:#333;transform:scaleX(0.958);transform-origin:0 0">Font Style</div>
<div class="a" style="left:558px;top:139.8px;width:144px;height:22.4px;background:#fff;border:1px solid #d4d4d4"></div>
<div class="t" style="left:563.5px;top:145px;font-size:12px;color:#333;transform:scaleX(0.958);transform-origin:0 0">Regular</div>
<svg class="a" style="left:684px;top:147px" width="10" height="8"><path d="M1 2 L5 6 L9 2" fill="none" stroke="#888" stroke-width="0.9"/></svg>
<div class="t" style="left:558.5px;top:183px;font-size:12px;color:#333;transform:scaleX(0.958);transform-origin:0 0">Font Size</div>
<div class="a" style="left:558px;top:201.5px;width:62px;height:23px;background:#fff;border:1px solid #d4d4d4"></div>
<div class="t" style="left:568px;top:208.5px;font-size:12px;color:#333;transform:scaleX(0.958);transform-origin:0 0">12</div>
<div class="t" style="left:589.5px;top:208.5px;font-size:12px;color:#333;transform:scaleX(0.958);transform-origin:0 0">pt</div>
<svg class="a" style="left:608px;top:202px" width="12" height="22"><path d="M2 8 L6 4.2 L10 8" fill="none" stroke="#555" stroke-width="0.9"/><path d="M2 15 L6 18.7 L10 15" fill="none" stroke="#555" stroke-width="0.9"/></svg>
<div class="t" style="left:558.5px;top:248.5px;font-size:12px;color:#333;transform:scaleX(0.958);transform-origin:0 0">Title Text</div>
<div class="a" style="left:558px;top:266.9px;width:145px;height:22.8px;background:#fff;border:1px solid #d4d4d4"></div>
<div class="t" style="left:565px;top:272.5px;font-size:12px;color:#333;transform:scaleX(0.958);transform-origin:0 0">Primary value axis</div>
<div class="t" style="left:558.5px;top:310.5px;font-size:12px;color:#333;transform:scaleX(0.958);transform-origin:0 0">Title Font Color</div>
<div class="a" style="left:558px;top:330.4px;width:43.5px;height:22.8px;background:#fff;border:1px solid #d4d4d4"></div>
<div class="a" style="left:563px;top:335.5px;width:13px;height:12.5px;background:#3b2142"></div>
<svg class="a" style="left:582px;top:338px" width="10" height="6"><path d="M1 1 L9 1 L5 5 Z" fill="#222"/></svg>
<div class="a" style="left:703px;top:117.5px;width:6px;height:259.3px;background:#d6d6d6"></div>
<div class="a" style="left:715px;top:216.5px;width:6px;height:92.5px;background:#d0d0d0;border-radius:2px"></div>
</body></html>
